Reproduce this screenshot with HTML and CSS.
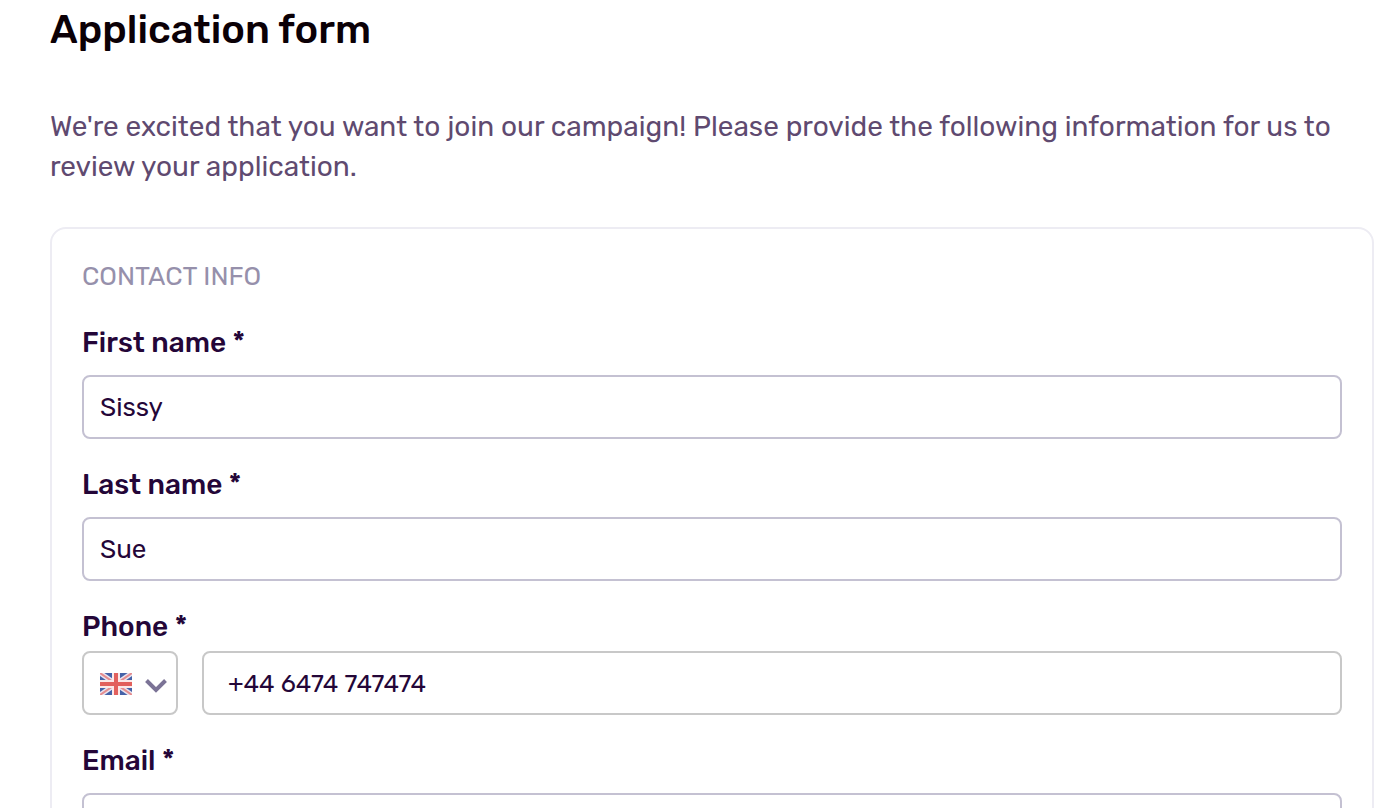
FILE: index.html
```html
<!DOCTYPE html>
<html lang="en">
<head>
  <meta charset="UTF-8">
  <meta name="viewport" content="width=device-width, initial-scale=1">
  <title>Application form</title>
  <link rel="stylesheet" href="styles.css">
</head>
<body>

  <h1>Application form</h1>
  <p class="intro">We're excited that you want to join our campaign! Please provide the following information for us to review your application.</p>

  <form class="card">
    <h2>CONTACT INFO</h2>

    <div class="field">
      <label for="firstName">First name *</label>
      <input type="text" id="firstName" value="Sissy" required>
    </div>

    <div class="field">
      <label for="lastName">Last name *</label>
      <input type="text" id="lastName" value="Sue" required>
    </div>

    <div class="field phone-field">
      <label for="phone">Phone *</label>
      <div class="phone-row">
        <div class="country">
          <select id="country" aria-label="Country code">
            <option value="44" label=" " selected></option>
          </select>
          <svg class="flag" viewBox="0 0 32 22" aria-hidden="true">
            <rect width="32" height="22" fill="#4562a8"/>
            <path d="M0 0L32 22M32 0L0 22" stroke="#e9e4f0" stroke-width="5"/>
            <path d="M0 0L32 22M32 0L0 22" stroke="#e58d8f" stroke-width="2"/>
            <path d="M16 0V22M0 11H32" stroke="#fbe9e9" stroke-width="8"/>
            <path d="M16 0V22M0 11H32" stroke="#e2605d" stroke-width="4"/>
          </svg>
          <svg class="arrow" viewBox="0 0 22 14" aria-hidden="true">
            <path d="M1.500 1.500L11 11L20.500 1.500" fill="none" stroke="#7b7396" stroke-width="4"/>
          </svg>
        </div>
        <input type="tel" id="phone" value="+44 6474 747474" required>
      </div>
    </div>

    <div class="field">
      <label for="email">Email *</label>
      <input type="email" id="email" required>
    </div>
  </form>

</body>
</html>
```
FILE: styles.css
```css
* {
  box-sizing: border-box;
}
body {
  margin: 0;
  padding: 6px 10px 32px 50px;
  font-family: Rubik, Roboto, sans-serif;
  font-size: 28px;
  line-height: 40px;
  background: #fff;
  color: #240638;
}
h1 {
  margin: 0;
  font-size: 40px;
  font-weight: 500;
  line-height: 48px;
  color: #0b0006;
}
.intro {
  margin: 53px 0 40px;
  color: #5f4a70;
}
.card {
  display: flex;
  flex-direction: column;
  gap: 26px;
  padding: 28px 30px;
  border: 2px solid #edecf3;
  border-radius: 16px;
}
h2 {
  margin: 0;
  font-size: 26px;
  font-weight: 400;
  color: #9690ab;
}
.field {
  display: flex;
  flex-direction: column;
  gap: 12px;
}
label {
  font-weight: 500;
}
input,
select {
  width: 100%;
  height: 64px;
  padding: 0 16px;
  border: 2px solid #c4c1d2;
  border-radius: 8px;
  background: #fff;
  color: #240638;
  font-family: inherit;
  font-size: 26px;
}
.phone-field {
  gap: 4px;
}
.phone-row {
  display: flex;
  gap: 24px;
}
.phone-row input,
.phone-row select {
  border-color: #c8c8c8;
}
.phone-row input {
  padding: 0 24px;
  font-size: 25px;
}
.country {
  position: relative;
  flex: 0 0 96px;
}
.country select {
  appearance: none;
  display: block;
}
.flag,
.arrow {
  position: absolute;
  pointer-events: none;
}
.flag {
  top: 22px;
  left: 18px;
  width: 32px;
  height: 22px;
}
.arrow {
  top: 28px;
  right: 11px;
  width: 22px;
  height: 14px;
}
```
